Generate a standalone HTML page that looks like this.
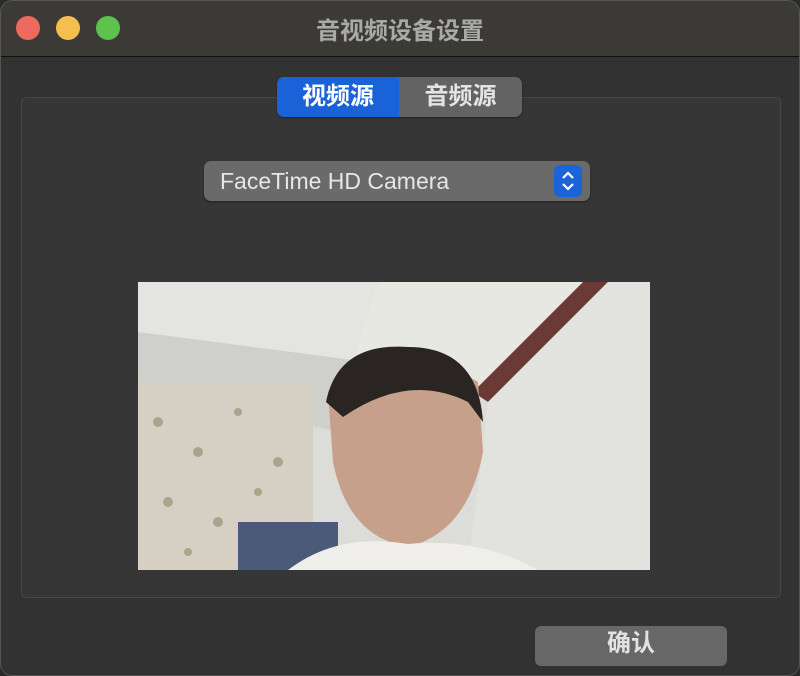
<!DOCTYPE html>
<html><head><meta charset="utf-8"><style>
*{margin:0;padding:0;box-sizing:border-box}
body{width:800px;height:676px;background:#2a2a2a;overflow:hidden;font-family:"Liberation Sans","Noto Sans CJK SC",sans-serif}
.win{position:absolute;left:0;top:0;width:800px;height:676px;border-radius:12px;background:#323232;overflow:hidden}
.frame{position:absolute;left:0;top:0;width:800px;height:676px;border-radius:12px;border:1px solid #555;pointer-events:none}
.title{position:absolute;left:0;top:0;width:800px;height:57px;background:#3b3a37;border-bottom:1px solid #111}
.dot{position:absolute;top:16px;width:24px;height:24px;border-radius:50%}
.title .t{position:absolute;left:0;width:800px;top:11px;text-align:center;color:#a9a9a6;font-size:24px;font-weight:bold}
.group{position:absolute;left:21px;top:97px;width:760px;height:501px;border:1px solid #474747;border-radius:5px;background:#363636}
.seg{position:absolute;left:277px;top:77px;width:245px;height:40px;border-radius:7px;background:#636363;overflow:hidden;box-shadow:0 1px 2px rgba(0,0,0,.4)}
.seg div{position:absolute;top:0;height:40px;line-height:40px;text-align:center;font-size:24px;font-weight:bold}
.pop{position:absolute;left:204px;top:161px;width:386px;height:40px;border-radius:7px;background:#6a6a6a;box-shadow:0 1px 2px rgba(0,0,0,.4)}
.pop span{position:absolute;left:16px;top:7px;font-size:23px;color:#e6e6e6}
.arr{position:absolute;left:554px;top:165px;width:28px;height:32px;border-radius:6px;background:#1b63d8}
.photo{position:absolute;left:138px;top:282px;width:512px;height:288px;overflow:hidden;background:#d8d8d4}
.btn{position:absolute;left:535px;top:626px;width:192px;height:40px;border-radius:6px;background:#676767;color:#e2e2e2;font-size:24px;font-weight:bold;text-align:center;line-height:36px}
</style></head><body>
<div class="win">
<div class="title">
<div class="dot" style="left:16px;background:#ee6a5e"></div>
<div class="dot" style="left:56px;background:#f5bf4f"></div>
<div class="dot" style="left:96px;background:#5ec24f"></div>
<div class="t">音视频设备设置</div>
</div>
<div class="group"></div>
<div class="seg">
<div style="left:0;width:122px;background:#1a62d7;color:#fff">视频源</div>
<div style="left:122px;width:123px;color:#e4e4e4">音频源</div>
</div>
<div class="pop"><span>FaceTime HD Camera</span></div>
<div class="arr"><svg width="28" height="32" viewBox="0 0 28 32"><path d="M9 13 L14 8 L19 13 M9 19 L14 24 L19 19" stroke="#fff" stroke-width="2.2" fill="none"/></svg></div>
<div class="photo">
<svg width="512" height="288" viewBox="0 0 512 288">
<rect width="512" height="288" fill="#dcdcd8"/>
<polygon points="0,0 260,0 230,80 0,50" fill="#e4e4e0"/>
<polygon points="0,50 230,80 200,150 0,100" fill="#cfcfcb"/>
<polygon points="240,0 450,0 340,110 210,100" fill="#e8e8e2"/>
<polygon points="445,0 470,0 350,120 335,110" fill="#6b3a34"/>
<polygon points="470,0 512,0 512,288 330,288 350,120" fill="#e2e2de"/>
<rect x="0" y="100" width="175" height="188" fill="#d6d0c4"/>
<g fill="#8a8a6a" opacity=".6">
<circle cx="20" cy="140" r="5"/><circle cx="60" cy="170" r="5"/><circle cx="100" cy="130" r="4"/><circle cx="140" cy="180" r="5"/><circle cx="30" cy="220" r="5"/><circle cx="80" cy="240" r="5"/><circle cx="120" cy="210" r="4"/><circle cx="160" cy="250" r="5"/><circle cx="50" cy="270" r="4"/>
</g>
<rect x="100" y="240" width="100" height="48" fill="#4a5a78"/>
<path d="M190 110 Q260 50 340 100 L345 170 Q330 250 270 265 Q210 255 195 180 Z" fill="#c6a08a"/>
<path d="M188 120 Q200 60 270 65 Q340 65 345 140 L330 120 Q270 90 205 135 Z" fill="#2a2422"/>
<path d="M150 288 Q200 250 270 262 Q340 255 400 288 Z" fill="#efeeea"/>
</svg>
</div>
<div class="btn">确认</div>
<div class="frame"></div>
</div>
</body></html>
